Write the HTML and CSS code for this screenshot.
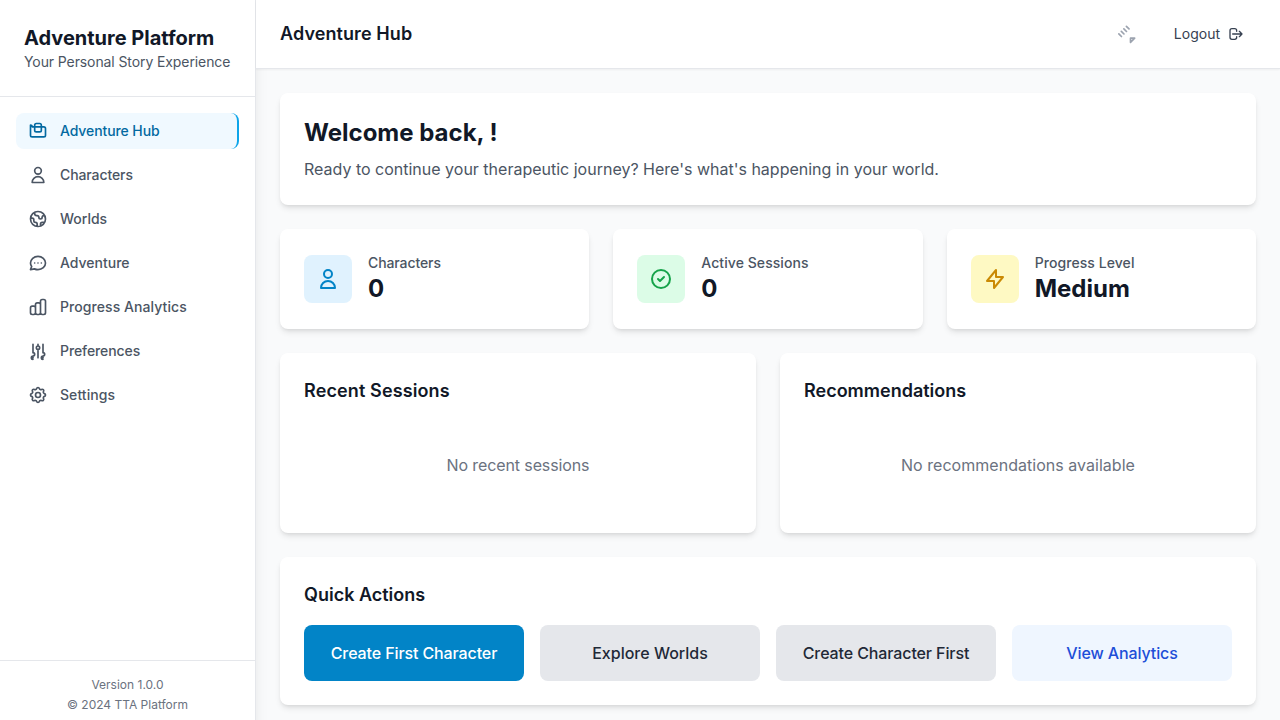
FILE: index.html
```html
<!DOCTYPE html>
<html lang="en">
<head>
<meta charset="utf-8">
<title>Adventure Platform</title>
<link rel="stylesheet" href="styles.css">
</head>
<body>
<div class="viewport">
<div class="app">
  <aside class="sidebar">
    <div class="brand">
      <h1 class="brand-title">Adventure Platform</h1>
      <p class="brand-sub tight">Your Personal Story Experience</p>
    </div>
    <nav class="nav">
      <a class="nav-item active tight"><svg class="icon" viewBox="0 0 24 24"><path d="M3 7v10a2 2 0 002 2h14a2 2 0 002-2V9a2 2 0 00-2-2H5a2 2 0 00-2-2z"/><path d="M8 5a2 2 0 012-2h4a2 2 0 012 2v6a2 2 0 01-2 2H10a2 2 0 01-2-2V5z"/></svg>Adventure Hub</a>
      <a class="nav-item tight"><svg class="icon" viewBox="0 0 24 24"><path d="M16 7a4 4 0 11-8 0 4 4 0 018 0zM12 14a7 7 0 00-7 7h14a7 7 0 00-7-7z"/></svg>Characters</a>
      <a class="nav-item"><svg class="icon" viewBox="0 0 24 24"><path d="M3.055 11H5a2 2 0 012 2v1a2 2 0 002 2 2 2 0 012 2v2.945M8 3.935V5.5A2.5 2.5 0 0010.5 8h.5a2 2 0 012 2 2 2 0 104 0 2 2 0 012-2h1.064M15 20.488V18a2 2 0 012-2h3.064M21 12a9 9 0 11-18 0 9 9 0 0118 0z"/></svg>Worlds</a>
      <a class="nav-item"><svg class="icon" viewBox="0 0 24 24"><path d="M8 12h.01M12 12h.01M16 12h.01M21 12c0 4.418-4.03 8-9 8a9.863 9.863 0 01-4.255-.949L3 20l1.395-3.72C3.512 15.042 3 13.574 3 12c0-4.418 4.03-8 9-8s9 3.582 9 8z"/></svg>Adventure</a>
      <a class="nav-item loose"><svg class="icon" viewBox="0 0 24 24"><path d="M9 19v-6a2 2 0 00-2-2H5a2 2 0 00-2 2v6a2 2 0 002 2h2a2 2 0 002-2zm0 0V9a2 2 0 012-2h2a2 2 0 012 2v10m-6 0a2 2 0 002 2h2a2 2 0 002-2m0 0V5a2 2 0 012-2h2a2 2 0 012 2v14a2 2 0 01-2 2h-2a2 2 0 01-2-2z"/></svg>Progress Analytics</a>
      <a class="nav-item tight"><svg class="icon" viewBox="0 0 24 24"><path d="M12 6V4m0 2a2 2 0 100 4m0-4a2 2 0 110 4m-6 8a2 2 0 100-4m0 4a2 2 0 100 4m0-4v2m0-6V4m6 6v10m6-2a2 2 0 100-4m0 4a2 2 0 100 4m0-4v2m0-6V4"/></svg>Preferences</a>
      <a class="nav-item loose"><svg class="icon" viewBox="0 0 24 24"><path d="M10.325 4.317c.426-1.756 2.924-1.756 3.35 0a1.724 1.724 0 002.573 1.066c1.543-.94 3.31.826 2.37 2.37a1.724 1.724 0 001.065 2.572c1.756.426 1.756 2.924 0 3.35a1.724 1.724 0 00-1.066 2.573c.94 1.543-.826 3.31-2.37 2.37a1.724 1.724 0 00-2.572 1.065c-.426 1.756-2.924 1.756-3.35 0a1.724 1.724 0 00-2.573-1.066c-1.543.94-3.31-.826-2.37-2.37a1.724 1.724 0 00-1.065-2.572c-1.756-.426-1.756-2.924 0-3.35a1.724 1.724 0 001.066-2.573c-.94-1.543.826-3.31 2.37-2.37.996.608 2.296.07 2.572-1.065z"/><path d="M15 12a3 3 0 11-6 0 3 3 0 016 0z"/></svg>Settings</a>
    </nav>
    <div class="side-footer">
      <p>Version 1.0.0</p>
      <p>© 2024 TTA Platform</p>
    </div>
  </aside>

  <div class="main">
    <header class="header">
      <h2 class="section-title loose">Adventure Hub</h2>
      <div class="header-actions">
        <button class="bell" aria-label="Notifications"><svg class="icon" viewBox="0 0 24 24"><path d="M15 17h5l-5 5v-5zM10.07 2.82l3.12 3.12M7.05 5.84l3.12 3.12M4.03 8.86l3.12 3.12M1.01 11.88l3.12 3.12"/></svg></button>
        <button class="logout">Logout<svg class="icon small" viewBox="0 0 24 24"><path d="M17 16l4-4m0 0l-4-4m4 4H7m6 4v1a3 3 0 01-3 3H6a3 3 0 01-3-3V7a3 3 0 013-3h4a3 3 0 013 3v1"/></svg></button>
      </div>
    </header>

    <main class="content">
      <section class="card">
        <h1 class="welcome-title">Welcome back, !</h1>
        <p class="welcome-text">Ready to continue your therapeutic journey? Here's what's happening in your world.</p>
      </section>

      <div class="stats">
        <section class="card stat">
          <div class="tile blue"><svg class="icon large" viewBox="0 0 24 24"><path d="M16 7a4 4 0 11-8 0 4 4 0 018 0zM12 14a7 7 0 00-7 7h14a7 7 0 00-7-7z"/></svg></div>
          <div><p class="stat-label tight">Characters</p><p class="stat-value">0</p></div>
        </section>
        <section class="card stat">
          <div class="tile green"><svg class="icon large" viewBox="0 0 24 24"><path d="M9 12l2 2 4-4m6 2a9 9 0 11-18 0 9 9 0 0118 0z"/></svg></div>
          <div><p class="stat-label loose">Active Sessions</p><p class="stat-value">0</p></div>
        </section>
        <section class="card stat">
          <div class="tile yellow"><svg class="icon large" viewBox="0 0 24 24"><path d="M13 10V3L4 14h7v7l9-11h-7z"/></svg></div>
          <div><p class="stat-label loose">Progress Level</p><p class="stat-value">Medium</p></div>
        </section>
      </div>

      <div class="panels">
        <section class="card">
          <h3 class="section-title looser">Recent Sessions</h3>
          <p class="empty tight">No recent sessions</p>
        </section>
        <section class="card">
          <h3 class="section-title">Recommendations</h3>
          <p class="empty slight">No recommendations available</p>
        </section>
      </div>

      <section class="card">
        <h3 class="section-title">Quick Actions</h3>
        <div class="actions">
          <button class="action primary tight">Create First Character</button>
          <button class="action">Explore Worlds</button>
          <button class="action tight">Create Character First</button>
          <button class="action soft tight">View Analytics</button>
        </div>
      </section>
    </main>
  </div>
</div>
</div>
</body>
</html>
```

FILE: styles.css
```css
* {
  box-sizing: border-box;
  margin: 0;
  padding: 0;
}

body {
  font-family: Inter, "Liberation Sans", sans-serif;
  font-size: 16px;
  line-height: 24px;
  color: #111827;
  background: #f9fafb;
}

button {
  font: inherit;
  color: inherit;
  border: 0;
  background: none;
}

.viewport {
  height: 100vh;
  overflow: hidden;
}

.app {
  display: flex;
  min-height: 100vh;
}

.icon {
  display: block;
  flex: none;
  width: 20px;
  height: 20px;
  fill: none;
  stroke: currentColor;
  stroke-width: 2;
  stroke-linecap: round;
  stroke-linejoin: round;
}

.icon.small {
  width: 16px;
  height: 16px;
}

.icon.large {
  width: 24px;
  height: 24px;
}

.sidebar {
  display: flex;
  flex-direction: column;
  flex: none;
  width: 256px;
  background: #fff;
  border-right: 1px solid #e5e7eb;
  box-shadow: 0 10px 15px -3px rgba(0, 0, 0, 0.1), 0 4px 6px -4px rgba(0, 0, 0, 0.1);
}

.brand {
  padding: 24px;
  border-bottom: 1px solid #e5e7eb;
  white-space: nowrap;
}

.brand-title {
  font-size: 20px;
  line-height: 28px;
  font-weight: 700;
}

.brand-sub {
  font-size: 14px;
  line-height: 20px;
  color: #4b5563;
}

.nav {
  display: flex;
  flex-direction: column;
  flex: 1;
  gap: 8px;
  padding: 16px;
}

.nav-item {
  display: flex;
  align-items: center;
  gap: 12px;
  padding: 8px 12px;
  border-radius: 8px;
  font-size: 14px;
  line-height: 20px;
  font-weight: 500;
  color: #4b5563;
}

.nav-item.active {
  color: #0369a1;
  background: #f0f9ff;
  border-right: 2px solid #0ea5e9;
}

.side-footer {
  display: flex;
  flex-direction: column;
  gap: 4px;
  padding: 16px;
  border-top: 1px solid #e5e7eb;
  font-size: 12px;
  line-height: 16px;
  text-align: center;
  color: #6b7280;
}

.main {
  flex: 1;
  min-width: 0;
}

.header {
  display: flex;
  align-items: center;
  justify-content: space-between;
  padding: 16px 24px;
  background: #fff;
  border-bottom: 1px solid #e5e7eb;
  box-shadow: 0 1px 2px rgba(0, 0, 0, 0.05);
}

.section-title {
  font-size: 18px;
  line-height: 28px;
  font-weight: 600;
}

.header-actions {
  display: flex;
  align-items: center;
  gap: 16px;
}

.bell {
  padding: 8px;
  color: #9ca3af;
}

.logout {
  display: flex;
  align-items: center;
  gap: 8px;
  padding: 8px 12px;
  font-size: 14px;
  line-height: 20px;
  color: #374151;
}

.content {
  display: flex;
  flex-direction: column;
  gap: 24px;
  padding: 24px;
}

.card {
  padding: 24px;
  border-radius: 8px;
  background: #fff;
  box-shadow: 0 4px 6px -1px rgba(0, 0, 0, 0.1), 0 2px 4px -2px rgba(0, 0, 0, 0.1);
}

.welcome-title {
  margin-bottom: 8px;
  font-size: 24px;
  line-height: 32px;
  font-weight: 700;
}

.welcome-text {
  color: #4b5563;
}

.stats {
  display: grid;
  grid-template-columns: repeat(3, 1fr);
  gap: 24px;
}

.stat {
  display: flex;
  align-items: center;
  gap: 16px;
}

.tile {
  padding: 12px;
  border-radius: 8px;
}

.blue {
  color: #0284c7;
  background: #e0f2fe;
}

.green {
  color: #16a34a;
  background: #dcfce7;
}

.yellow {
  color: #ca8a04;
  background: #fef9c3;
}

.stat-label {
  font-size: 14px;
  line-height: 20px;
  font-weight: 500;
  color: #4b5563;
}

.stat-value {
  font-size: 24px;
  line-height: 32px;
  font-weight: 700;
}

.panels {
  display: grid;
  grid-template-columns: repeat(2, 1fr);
  gap: 24px;
}

.empty {
  margin-top: 16px;
  padding: 32px 0;
  text-align: center;
  color: #6b7280;
}

.actions {
  display: grid;
  grid-template-columns: repeat(4, 1fr);
  gap: 16px;
  margin-top: 16px;
}

.action {
  padding: 16px;
  border-radius: 8px;
  font-weight: 500;
  color: #1f2937;
  background: #e5e7eb;
}

.action.primary {
  color: #fff;
  background: #0284c7;
}

.action.soft {
  color: #1d4ed8;
  background: #eff6ff;
}

/* Tracking adjustments */
.tight {
  letter-spacing: -0.007em;
}

.slight {
  letter-spacing: 0.002em;
}

.loose {
  letter-spacing: 0.005em;
}

.looser {
  letter-spacing: 0.007em;
}
```
